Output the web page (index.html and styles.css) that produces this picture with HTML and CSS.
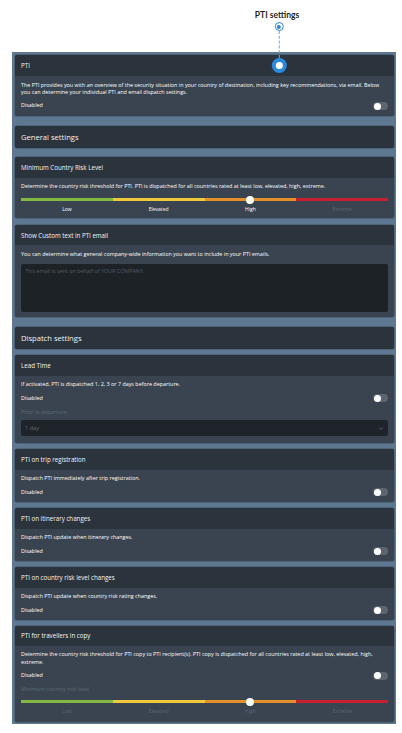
FILE: index.html
```html
<!DOCTYPE html>
<html lang="en">
<head>
<meta charset="utf-8">
<title>PTI settings</title>
<link rel="stylesheet" href="styles.css">
</head>
<body>
<div class="top">
  <div class="tour">
    <div class="tour-label">PTI settings</div>
    <div class="tour-ring"><div class="tour-ring-dot"></div></div>
    <div class="tour-line"></div>
    <div class="tour-marker"><div class="tour-marker-dot"></div></div>
  </div>
</div>
<div class="panel">
  <section class="card gap-10">
    <div class="card-head">PTI</div>
    <div class="card-body">
      <p class="desc">The PTI provides you with an overview of the security situation in your country of destination, including key recommendations, via email. Below you can determine your individual PTI and email dispatch settings.</p>
      <div class="switch-row"><span>Disabled</span><span class="toggle"><span class="knob"></span></span></div>
    </div>
  </section>

  <section class="card section-card gap-9">
    <div class="section-head">General settings</div>
  </section>

  <section class="card gap-7">
    <div class="card-head">Minimum Country Risk Level</div>
    <div class="card-body body-risk">
      <p class="desc">Determine the country risk threshold for PTI. PTI is dispatched for all countries rated at least low, elevated, high, extreme.</p>
      <div class="risk">
        <div class="risk-track">
          <span class="seg seg-low"></span><span class="seg seg-elev"></span><span class="seg seg-high"></span><span class="seg seg-ext"></span>
          <span class="risk-knob"></span>
        </div>
        <div class="risk-labels"><span>Low</span><span>Elevated</span><span>High</span><span class="dim">Extreme</span></div>
      </div>
    </div>
  </section>

  <section class="card gap-9">
    <div class="card-head head-20">Show Custom text in PTI email</div>
    <div class="card-body body-text">
      <p class="desc">You can determine what general company-wide information you want to include in your PTI emails.</p>
      <textarea class="textarea" placeholder="This email is sent on behalf of YOUR COMPANY."></textarea>
    </div>
  </section>

  <section class="card section-card gap-6">
    <div class="section-head">Dispatch settings</div>
  </section>

  <section class="card gap-6">
    <div class="card-head">Lead Time</div>
    <div class="card-body body-lead">
      <p class="desc">If activated, PTI is dispatched 1, 2, 3 or 7 days before departure.</p>
      <div class="switch-row"><span>Disabled</span><span class="toggle"><span class="knob"></span></span></div>
      <div class="field-label">Prior to departure</div>
      <div class="select"><span>1 day</span><svg class="chev" viewBox="0 0 6 4" width="4" height="3"><path d="M0.5 0.8 L3 3.2 L5.5 0.8" fill="none" stroke="#6d747c" stroke-width="1"/></svg></div>
    </div>
  </section>

  <section class="card gap-6">
    <div class="card-head">PTI on trip registration</div>
    <div class="card-body">
      <p class="desc">Dispatch PTI immediately after trip registration.</p>
      <div class="switch-row"><span>Disabled</span><span class="toggle"><span class="knob"></span></span></div>
    </div>
  </section>

  <section class="card gap-6">
    <div class="card-head">PTI on itinerary changes</div>
    <div class="card-body">
      <p class="desc">Dispatch PTI update when itinerary changes.</p>
      <div class="switch-row"><span>Disabled</span><span class="toggle"><span class="knob"></span></span></div>
    </div>
  </section>

  <section class="card gap-6">
    <div class="card-head">PTI on country risk level changes</div>
    <div class="card-body">
      <p class="desc">Dispatch PTI update when country risk rating changes.</p>
      <div class="switch-row"><span>Disabled</span><span class="toggle"><span class="knob"></span></span></div>
    </div>
  </section>

  <section class="card">
    <div class="card-head head-20">PTI for travellers in copy</div>
    <div class="card-body body-copy">
      <p class="desc">Determine the country risk threshold for PTI copy to PTI recipient(s). PTI copy is dispatched for all countries rated at least low, elevated, high, extreme.</p>
      <div class="switch-row"><span>Disabled</span><span class="toggle"><span class="knob"></span></span></div>
      <div class="field-label">Minimum country risk level</div>
      <div class="risk risk-copy">
        <div class="risk-track">
          <span class="seg seg-low"></span><span class="seg seg-elev"></span><span class="seg seg-high"></span><span class="seg seg-ext"></span>
          <span class="risk-knob"></span>
        </div>
        <div class="risk-labels"><span class="dim">Low</span><span class="dim">Elevated</span><span class="dim">High</span><span class="dim">Extreme</span></div>
      </div>
    </div>
  </section>
</div>
</body>
</html>
```

FILE: styles.css
```css
* { box-sizing: border-box; }

html, body {
  margin: 0;
  padding: 0;
  background: #ffffff;
}

body {
  font-family: "Open Sans", "Noto Sans", sans-serif;
  color: #ffffff;
  width: 402px;
}

.top {
  height: 52px;
  position: relative;
}

.tour {
  position: absolute;
  left: 279px;
  top: 10px;
  transform: translateX(-50%);
  display: flex;
  flex-direction: column;
  align-items: center;
  z-index: 5;
}

.tour-label {
  font-family: "Lato", "Open Sans", sans-serif;
  font-weight: 700;
  font-size: 8.5px;
  line-height: 11px;
  color: #1d1f22;
  white-space: nowrap;
  margin-right: 4px;
}

.tour-ring {
  margin-top: 1px;
  width: 9px;
  height: 9px;
  border-radius: 50%;
  border: 1px solid #2f86cf;
  background: #ffffff;
  display: flex;
  align-items: center;
  justify-content: center;
}

.tour-ring-dot {
  width: 4px;
  height: 4px;
  border-radius: 50%;
  background: #2f86cf;
}

.tour-line {
  width: 0;
  height: 27px;
  border-left: 1px dashed #5aaee6;
}

.tour-marker {
  width: 15px;
  height: 15px;
  border-radius: 50%;
  background: #2a8ddb;
  display: flex;
  align-items: center;
  justify-content: center;
}

.tour-marker-dot {
  width: 7px;
  height: 7px;
  border-radius: 50%;
  background: #ffffff;
}

.panel {
  margin-left: 12px;
  width: 384px;
  background: #5f7891;
  padding: 3px 2px 2px 3px;
  display: flex;
  flex-direction: column;
}

.card {
  background: #3a4450;
  border-radius: 2px;
  overflow: hidden;
  box-shadow: 0 0 0 0.5px rgba(30, 36, 44, 0.5);
}

.gap-10 { margin-bottom: 10px; }
.gap-9 { margin-bottom: 9.4px; }
.gap-7 { margin-bottom: 6.7px; }
.gap-6 { margin-bottom: 6px; }

.card-head {
  background: #2b333c;
  height: 21px;
  padding: 0 6px;
  display: flex;
  align-items: center;
  font-size: 6.2px;
  color: #f4f5f7;
}

.head-20 { height: 20px; }

.section-card { background: #2b333c; }

.section-head {
  height: 22px;
  padding: 0 6px;
  display: flex;
  align-items: center;
  font-size: 7.6px;
  color: #f4f5f7;
}

.card-body {
  padding: 5.5px 5px 5px 6px;
  font-size: 5.4px;
  line-height: 7.5px;
}

.body-lead { padding-bottom: 6.5px; }

.desc {
  margin: 0;
}

.switch-row {
  margin-top: 5px;
  height: 9px;
  display: flex;
  align-items: center;
  justify-content: space-between;
  padding-right: 1px;
}

.toggle {
  width: 15px;
  height: 8px;
  border-radius: 4px;
  background: #5e656d;
  display: flex;
  align-items: center;
  padding: 0 0.5px;
}

.knob {
  width: 7px;
  height: 7px;
  border-radius: 50%;
  background: #ffffff;
}

.field-label {
  margin-top: 6px;
  color: #5d6874;
}

.select {
  margin-top: 4px;
  margin-right: 1px;
  height: 16px;
  border-radius: 2px;
  background: #1f242a;
  display: flex;
  align-items: center;
  justify-content: space-between;
  padding: 0 5px 0 4px;
  color: #5f6870;
  font-size: 5.6px;
}

.body-copy { padding-bottom: 6px; }

.chev { display: block; }

.body-text { padding-bottom: 5.3px; }

.textarea {
  display: block;
  margin-top: 6px;
  width: calc(100% - 1px);
  height: 48px;
  resize: none;
  border: none;
  border-radius: 2px;
  background: #1d2227;
  padding: 4px 4px;
  font-family: inherit;
  font-size: 5.4px;
  line-height: 7px;
  color: #ffffff;
}

.textarea::placeholder {
  color: #555c64;
}

.body-risk { padding-bottom: 4.5px; }

.risk { margin-top: 5px; margin-right: 1px; }
.risk-copy { margin-top: 4px; }

.risk-track {
  position: relative;
  height: 8px;
  display: flex;
  align-items: center;
}

.seg {
  flex: 1;
  height: 3px;
}

.seg-low { background: #84b842; }
.seg-elev { background: #f0c93a; }
.seg-high { background: #e4912b; }
.seg-ext { background: #c8202f; }

.risk-knob {
  position: absolute;
  left: 62.5%;
  top: 0;
  width: 8px;
  height: 8px;
  margin-left: -4px;
  border-radius: 50%;
  background: #ffffff;
}

.risk-labels {
  margin-top: 2.5px;
  display: grid;
  grid-template-columns: repeat(4, 1fr);
  text-align: center;
  font-size: 5px;
  line-height: 7.5px;
}

.dim { color: #5b6672; }
```
